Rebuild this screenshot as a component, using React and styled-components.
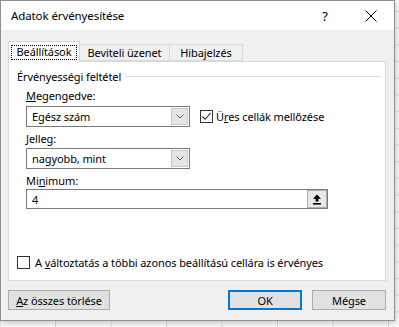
import React from "react";
import styled, { createGlobalStyle } from "styled-components";

const GlobalStyle = createGlobalStyle`
  html, body {
    margin: 0;
    padding: 0;
  }
  body {
    width: 399px;
    height: 327px;
    overflow: hidden;
    background-color: #fbfbfb;
    background-image:
      linear-gradient(to right, #d6d6d6 1px, transparent 1px),
      linear-gradient(to bottom, #dcdcdc 1px, transparent 1px);
    background-size: 55.5px 16.7px;
    background-position: 55px 11px;
    font-family: "Noto Sans", "Open Sans", sans-serif;
    font-size: 11px;
    letter-spacing: -0.1px;
    color: #000;
  }
`;

const Dialog = styled.div`
  width: 395px;
  height: 321px;
  box-sizing: border-box;
  border: 1px solid #8f8f8f;
  background: #f0f0f0;
  display: flex;
  flex-direction: column;
  box-shadow: 1px 2px 6px rgba(0, 0, 0, 0.22);
`;

const TitleBar = styled.div`
  height: 29px;
  background: #fff;
  display: flex;
  align-items: center;
  padding-left: 10px;
`;

const Title = styled.div`
  flex: 1;
  font-size: 11.5px;
`;

const TitleButton = styled.div`
  width: 46px;
  height: 29px;
  display: flex;
  align-items: center;
  justify-content: center;
  font-size: 13px;
`;

const Body = styled.div`
  flex: 1;
  padding: 0 8px 0 7px;
  display: flex;
  flex-direction: column;
`;

const TabStrip = styled.div`
  height: 31px;
  display: flex;
  align-items: flex-end;
`;

const Tab = styled.div`
  position: relative;
  z-index: ${(p) => (p.$active ? 1 : 0)};
  box-sizing: border-box;
  width: ${(p) => p.$width}px;
  height: ${(p) => (p.$active ? 21 : 17)}px;
  margin-bottom: ${(p) => (p.$active ? -1 : 0)}px;
  margin-left: ${(p) => (p.$first ? 0 : -1)}px;
  border: 1px solid #d9d9d9;
  border-bottom: ${(p) => (p.$active ? "none" : "1px solid #d9d9d9")};
  background: ${(p) => (p.$active ? "#fff" : "#f0f0f0")};
  display: flex;
  align-items: ${(p) => (p.$active ? "flex-start" : "center")};
  justify-content: center;
  padding-top: ${(p) => (p.$active ? 3 : 0)}px;
  white-space: nowrap;
`;

const FocusRect = styled.span`
  display: inline-block;
  box-sizing: border-box;
  width: 66px;
  text-align: center;
  border: 1px dotted #000;
  line-height: 12px;
  padding: 0 0 1px;
`;

const Panel = styled.div`
  height: 220px;
  box-sizing: border-box;
  background: #fff;
  border: 1px solid #d9d9d9;
  display: flex;
  flex-direction: column;
  padding: 0 4px 10px 8px;
`;

const GroupHeader = styled.div`
  margin-top: 6px;
  height: 16px;
  display: flex;
  align-items: center;
  gap: 5px;
  white-space: nowrap;

  &::after {
    content: "";
    flex: 1;
    height: 1px;
    background: #dcdcdc;
  }
`;

const Fields = styled.div`
  padding-left: 9px;
  display: flex;
  flex-direction: column;
`;

const FieldLabel = styled.div`
  height: 16px;
  line-height: 16px;
  margin-top: ${(p) => p.$top || 0}px;
`;

const Row = styled.div`
  display: flex;
  align-items: center;
  gap: 10px;
  margin-top: ${(p) => p.$top || 0}px;
`;

const Combo = styled.div`
  width: 164px;
  height: 21px;
  box-sizing: border-box;
  border: 1px solid #7a7a7a;
  display: flex;
  align-items: stretch;
`;

const ComboValue = styled.div`
  flex: 1;
  padding-left: 5px;
  display: flex;
  align-items: center;
`;

const DropButton = styled.div`
  width: 15px;
  margin: 1px;
  background: #e5e5e5;
  border: 1px solid #c8c8c8;
  display: flex;
  align-items: center;
  justify-content: center;
`;

const TextBox = styled.div`
  width: 302px;
  height: 20px;
  box-sizing: border-box;
  border: 1px solid #7a7a7a;
  display: flex;
  align-items: stretch;
  margin-top: ${(p) => p.$top || 0}px;
`;

const RefButton = styled.div`
  width: 18px;
  background: #e8e8e8;
  border: 1px solid #adadad;
  display: flex;
  align-items: center;
  justify-content: center;
`;

const CheckRow = styled.label`
  display: flex;
  align-items: center;
  gap: ${(p) => p.$gap || 4}px;
  white-space: nowrap;
  margin-top: ${(p) => (p.$bottom ? "auto" : "0")};
`;

const Box = styled.span`
  width: 13px;
  height: 13px;
  box-sizing: border-box;
  border: 1px solid #333;
  background: #fff;
  display: flex;
  align-items: center;
  justify-content: center;
`;

const Footer = styled.div`
  margin-top: 9px;
  display: flex;
  align-items: center;
  gap: 10px;
`;

const Button = styled.div`
  width: ${(p) => p.$width}px;
  height: 20px;
  box-sizing: border-box;
  background: #e1e1e1;
  border: 1px solid ${(p) => (p.$default ? "#0078d7" : "#adadad")};
  box-shadow: ${(p) => (p.$default ? "inset 0 0 0 1px #0078d7" : "none")};
  display: flex;
  align-items: center;
  justify-content: center;
  margin-left: ${(p) => (p.$push ? "auto" : "0")};
`;

const Chevron = () => (
  <svg width="8" height="5" viewBox="0 0 8 5">
    <path d="M0.5 0.5 L4 4 L7.5 0.5" fill="none" stroke="#606060" strokeWidth="1" />
  </svg>
);

const CloseIcon = () => (
  <svg width="12" height="12" viewBox="0 0 12 12">
    <path d="M0.5 0.5 L11.5 11.5 M11.5 0.5 L0.5 11.5" stroke="#000" strokeWidth="1" />
  </svg>
);

const Tick = () => (
  <svg width="11" height="11" viewBox="0 0 11 11">
    <path d="M1.5 5.5 L4.2 8.3 L9.5 2" fill="none" stroke="#222" strokeWidth="1.1" />
  </svg>
);

const RefArrow = () => (
  <svg width="10" height="11" viewBox="0 0 10 11">
    <path d="M5 0.5 L1 4.8 H3.6 V7.6 H6.4 V4.8 H9 Z" fill="#000" />
    <rect x="1" y="9" width="8" height="1.6" fill="#000" />
  </svg>
);

const App = () => {
  return (
    <>
      <GlobalStyle />
      <Dialog>
        <TitleBar>
          <Title>Adatok érvényesítése</Title>
          <TitleButton>?</TitleButton>
          <TitleButton>
            <CloseIcon />
          </TitleButton>
        </TitleBar>
        <Body>
          <TabStrip>
            <Tab $active $first $width={72}>
              <FocusRect>Beállítások</FocusRect>
            </Tab>
            <Tab $width={91}>Beviteli üzenet</Tab>
            <Tab $width={74}>Hibajelzés</Tab>
          </TabStrip>
          <Panel>
            <GroupHeader>Érvényességi feltétel</GroupHeader>
            <Fields>
              <FieldLabel $top={4}>
                <u>M</u>egengedve:
              </FieldLabel>
              <Row $top={2}>
                <Combo>
                  <ComboValue>Egész szám</ComboValue>
                  <DropButton>
                    <Chevron />
                  </DropButton>
                </Combo>
                <CheckRow $gap={3}>
                  <Box>
                    <Tick />
                  </Box>
                  <span>
                    Ü<u>r</u>es cellák mellőzése
                  </span>
                </CheckRow>
              </Row>
              <FieldLabel $top={4}>
                <u>J</u>elleg:
              </FieldLabel>
              <Row $top={1}>
                <Combo>
                  <ComboValue>nagyobb, mint</ComboValue>
                  <DropButton>
                    <Chevron />
                  </DropButton>
                </Combo>
              </Row>
              <FieldLabel $top={4}>
                Mi<u>n</u>imum:
              </FieldLabel>
              <TextBox>
                <ComboValue>4</ComboValue>
                <RefButton>
                  <RefArrow />
                </RefButton>
              </TextBox>
            </Fields>
            <CheckRow $bottom $gap={5}>
              <Box />
              <span>
                A <u>v</u>áltoztatás a többi azonos beállítású cellára is érvényes
              </span>
            </CheckRow>
          </Panel>
          <Footer>
            <Button $width={102}>
              <span>
                <u>A</u>z összes törlése
              </span>
            </Button>
            <Button $width={74} $default $push>
              OK
            </Button>
            <Button $width={74}>Mégse</Button>
          </Footer>
        </Body>
      </Dialog>
    </>
  );
};

export default App;
